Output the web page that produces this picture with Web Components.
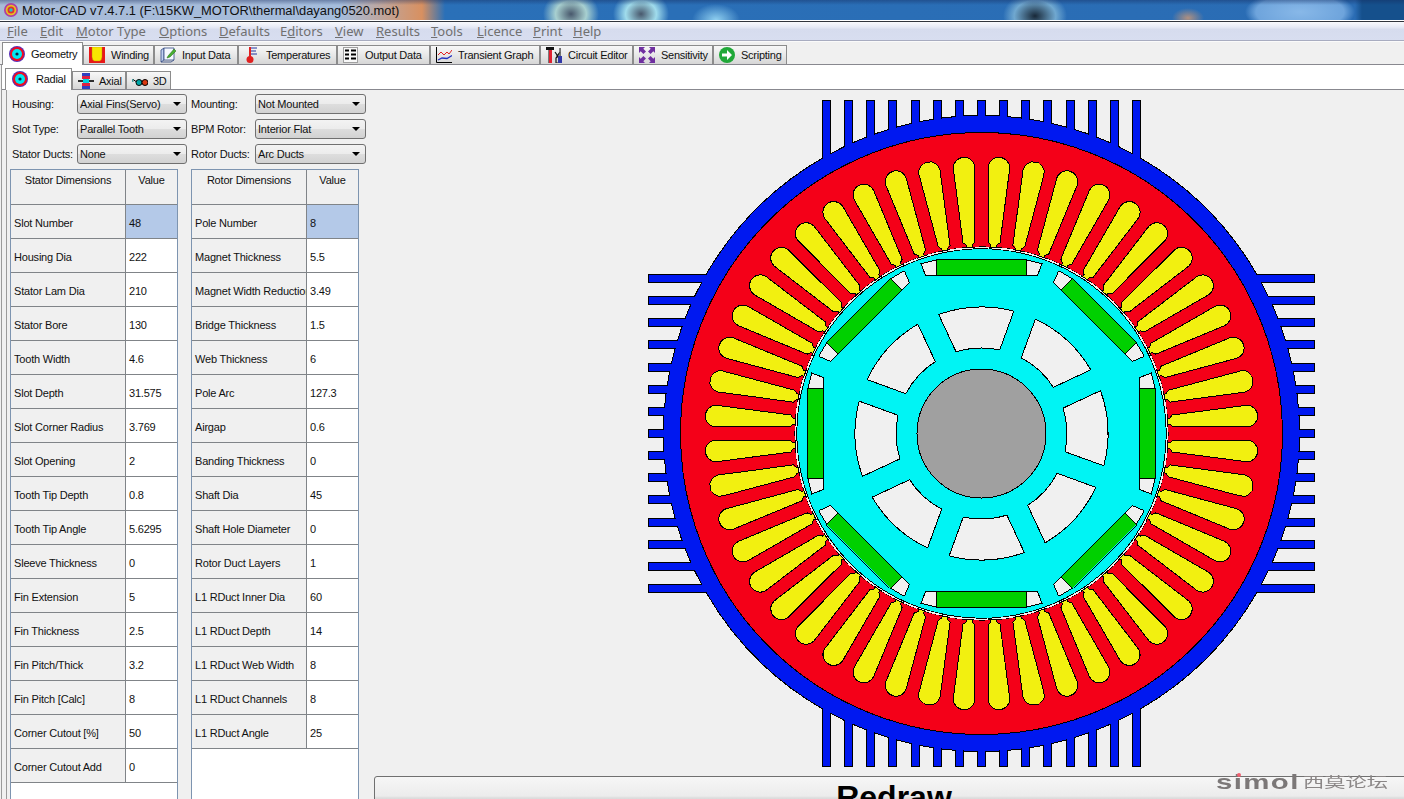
<!DOCTYPE html>
<html>
<head>
<meta charset="utf-8">
<title>Motor-CAD</title>
<style>
  html, body { margin: 0; height: 100%; overflow: hidden; background: #f0f0f0; }
  body { font-family: "Liberation Sans", Arial, sans-serif; }
</style>
</head>
<body>
<app-shell>
  <title-bar>Motor-CAD v7.4.7.1 (F:\15KW_MOTOR\thermal\dayang0520.mot)</title-bar>
  <menu-bar>
    <menu-item style="width:33px"><u>F</u>ile</menu-item>
    <menu-item style="width:36px"><u>E</u>dit</menu-item>
    <menu-item style="width:83px"><u>M</u>otor Type</menu-item>
    <menu-item style="width:60px"><u>O</u>ptions</menu-item>
    <menu-item style="width:61px"><u>D</u>efaults</menu-item>
    <menu-item style="width:55px">E<u>d</u>itors</menu-item>
    <menu-item style="width:41px"><u>V</u>iew</menu-item>
    <menu-item style="width:55px"><u>R</u>esults</menu-item>
    <menu-item style="width:46px"><u>T</u>ools</menu-item>
    <menu-item style="width:56px"><u>L</u>icence</menu-item>
    <menu-item style="width:40px"><u>P</u>rint</menu-item>
    <menu-item style="width:40px"><u>H</u>elp</menu-item>
  </menu-bar>
  <tab-strip>
    <tab-item active icon="geometry" style="width:81px">Geometry</tab-item>
    <tab-item icon="winding" style="width:71px">Winding</tab-item>
    <tab-item icon="input" style="width:84px">Input Data</tab-item>
    <tab-item icon="temp" style="width:99px">Temperatures</tab-item>
    <tab-item icon="output" style="width:93px">Output Data</tab-item>
    <tab-item icon="graph" style="width:110px">Transient Graph</tab-item>
    <tab-item icon="circuit" style="width:93px">Circuit Editor</tab-item>
    <tab-item icon="sens" style="width:80px">Sensitivity</tab-item>
    <tab-item icon="script" style="width:74px">Scripting</tab-item>
  </tab-strip>
  <tab-page>
    <sub-strip>
      <tab-item sub active icon="geometry" style="width:67px">Radial</tab-item>
      <tab-item sub icon="axial" style="width:54px">Axial</tab-item>
      <tab-item sub icon="glasses" style="width:45px">3D</tab-item>
    </sub-strip>
    <radial-page>
      <geom-panel>
        <geom-form>
          <span>Housing:</span><combo-box>Axial Fins(Servo)</combo-box>
          <span class="second">Mounting:</span><combo-box>Not Mounted</combo-box>
          <span>Slot Type:</span><combo-box>Parallel Tooth</combo-box>
          <span class="second">BPM Rotor:</span><combo-box>Interior Flat</combo-box>
          <span>Stator Ducts:</span><combo-box>None</combo-box>
          <span class="second">Rotor Ducts:</span><combo-box>Arc Ducts</combo-box>
        </geom-form>
        <dim-tables>
          <dim-table heading="Stator Dimensions">
            <dim-row label="Slot Number" value="48" selected></dim-row>
            <dim-row label="Housing Dia" value="222"></dim-row>
            <dim-row label="Stator Lam Dia" value="210"></dim-row>
            <dim-row label="Stator Bore" value="130"></dim-row>
            <dim-row label="Tooth Width" value="4.6"></dim-row>
            <dim-row label="Slot Depth" value="31.575"></dim-row>
            <dim-row label="Slot Corner Radius" value="3.769"></dim-row>
            <dim-row label="Slot Opening" value="2"></dim-row>
            <dim-row label="Tooth Tip Depth" value="0.8"></dim-row>
            <dim-row label="Tooth Tip Angle" value="5.6295"></dim-row>
            <dim-row label="Sleeve Thickness" value="0"></dim-row>
            <dim-row label="Fin Extension" value="5"></dim-row>
            <dim-row label="Fin Thickness" value="2.5"></dim-row>
            <dim-row label="Fin Pitch/Thick" value="3.2"></dim-row>
            <dim-row label="Fin Pitch [Calc]" value="8"></dim-row>
            <dim-row label="Corner Cutout [%]" value="50"></dim-row>
            <dim-row label="Corner Cutout Add" value="0"></dim-row>
          </dim-table>
          <dim-table heading="Rotor Dimensions">
            <dim-row label="Pole Number" value="8" selected></dim-row>
            <dim-row label="Magnet Thickness" value="5.5"></dim-row>
            <dim-row label="Magnet Width Reduction" value="3.49"></dim-row>
            <dim-row label="Bridge Thickness" value="1.5"></dim-row>
            <dim-row label="Web Thickness" value="6"></dim-row>
            <dim-row label="Pole Arc" value="127.3"></dim-row>
            <dim-row label="Airgap" value="0.6"></dim-row>
            <dim-row label="Banding Thickness" value="0"></dim-row>
            <dim-row label="Shaft Dia" value="45"></dim-row>
            <dim-row label="Shaft Hole Diameter" value="0"></dim-row>
            <dim-row label="Rotor Duct Layers" value="1"></dim-row>
            <dim-row label="L1 RDuct Inner Dia" value="60"></dim-row>
            <dim-row label="L1 RDuct Depth" value="14"></dim-row>
            <dim-row label="L1 RDuct Web Width" value="8"></dim-row>
            <dim-row label="L1 RDuct Channels" value="8"></dim-row>
            <dim-row label="L1 RDuct Angle" value="25"></dim-row>
          </dim-table>
        </dim-tables>
      </geom-panel>
      <motor-area>
        <motor-view></motor-view>
        <redraw-button>Redraw</redraw-button>
      </motor-area>
    </radial-page>
  </tab-page>
  <water-mark></water-mark>
</app-shell>

<script>
// small helper, every element here is just a style + markup in an open shadow root
function define(name, html, extra) {
  const tpl = document.createElement("template");
  tpl.innerHTML = html;
  class El extends HTMLElement {
    constructor() {
      super();
      this.attachShadow({ mode: "open" });
      this.shadowRoot.appendChild(tpl.content.cloneNode(true));
    }
    connectedCallback() {
      if (extra) extra.call(this, this.shadowRoot);
    }
  }
  customElements.define(name, El);
}

const ICONS = {
  geometry: `<circle cx="8" cy="8" r="8" fill="#5a30b8"/><circle cx="8" cy="8" r="7" fill="#f00c20"/><circle cx="8" cy="8" r="5" fill="#00e8f0"/><circle cx="8" cy="8" r="1.6" fill="#102040"/>`,
  winding: `<rect width="16" height="16" fill="#e81818"/><path d="M3 0h10v10q0 3-2.500 4h-5q-2.500-1-2.500-4z" fill="#f8e800" stroke="#b09000" stroke-width=".4"/>`,
  input: `<path d="M1 3l3-2v12l-3 2z" fill="#c0d0f0" stroke="#304880" stroke-width=".8"/><path d="M4 1h10v12H4z" fill="#f4f8ff" stroke="#304880" stroke-width=".8"/><path d="M1 15h10l3-2" fill="none" stroke="#304880" stroke-width=".8"/><path d="M8 9l6-7 2 2-6 6-3 1z" fill="#48b030" stroke="#206010" stroke-width=".5"/>`,
  temp: `<rect x="5" y="0" width="2" height="11" fill="#e02020"/><circle cx="6" cy="12.500" r="3.500" fill="#e02020"/><path d="M7 1h6M7 4h5M7 7h6" stroke="#2030a0" stroke-width="1" fill="none"/>`,
  output: `<rect x=".5" y=".5" width="14" height="15" fill="#f8f8f8" stroke="#a0a0a0"/><path d="M2 3.500h4M8 3.500h5M2 7.500h4M8 7.500h5M2 11.500h4M8 11.500h5" stroke="#000" stroke-width="1.800" fill="none"/>`,
  graph: `<path d="M.5 0v15.500H16" stroke="#000" fill="none"/><path d="M2 8l3-3 3 3 3-3 2 2 3-4" stroke="#e02020" fill="none"/><path d="M2 13l4-2 5 .5 5-3" stroke="#2030c0" stroke-width="1.300" fill="none"/>`,
  circuit: `<path d="M0 0h8v3H5.500v13h-3V3H0z" fill="#111"/><rect x="3" y="3" width="3" height="13" fill="#e02030"/><path d="M9 5l2 3v2l-1 1v5h3v-5l-1-1V8l2-3" fill="none" stroke="#111" stroke-width="1.200"/><rect x="12" y="9" width="4" height="7" fill="#3038a8"/><rect x="13.300" y="1" width="1.500" height="8" fill="#555"/>`,
  sens: `<g fill="#7030a0"><path d="M0 0h6L4.300 1.700 7 4.400 4.400 7 1.700 4.300 0 6z"/><path d="M16 0h-6l1.700 1.700L9 4.400 11.600 7l2.700-2.700L16 6z"/><path d="M0 16h6l-1.700-1.700L7 11.600 4.400 9l-2.700 2.700L0 10z"/><path d="M16 16h-6l1.700-1.700L9 11.600 11.600 9l2.700 2.700L16 10z"/></g>`,
  script: `<circle cx="8" cy="8" r="8" fill="#20a838"/><path d="M3 6.500h5V3l5 5-5 5V9.500H3z" fill="#fff"/>`,
  axial: `<path d="M0 8h16" stroke="#000" stroke-width="1.600"/><rect x="4" y="0" width="8" height="3" fill="#3040c0"/><rect x="4" y="3" width="8" height="3" fill="#e02040"/><rect x="5" y="6" width="6" height="4" fill="#00d0e0"/><rect x="4" y="10" width="8" height="3" fill="#e02040"/><rect x="4" y="13" width="8" height="3" fill="#3040c0"/>`,
  glasses: `<circle cx="7" cy="9.500" r="3" fill="#00a8a8" stroke="#000"/><circle cx="13" cy="9.500" r="3" fill="#d83810" stroke="#000"/><path d="M1 6.500l3 2M10 9h0" stroke="#000" fill="none"/><path d="M1 6q-1 1 0 3" stroke="#008080" fill="none"/>`
};

define("app-shell", `
  <style>
    :host { display: flex; flex-direction: column; height: 799px; width: 1404px; overflow: hidden; position: relative; }
  </style>
  <slot></slot>`);

define("title-bar", `
  <style>
    :host {
      display: flex; align-items: center; gap: 4px; flex: none; height: 20px; padding-left: 4px;
      font: 12.9px "Liberation Sans", Arial, sans-serif; color: #111; white-space: nowrap;
      background:
        linear-gradient(rgba(20,40,90,.4), rgba(20,40,90,0) 5px),
        radial-gradient(ellipse 28px 24px at 571px 14px, #48586c 0, #a8d0d0 55%, transparent 100%),
        radial-gradient(ellipse 28px 24px at 641px 14px, #48586c 0, #a0dcec 55%, transparent 100%),
        radial-gradient(ellipse 24px 16px at 716px 20px, #90d0f0 0, transparent 100%),
        radial-gradient(ellipse 32px 24px at 1035px 16px, #182838 0, #70a8d0 65%, transparent 100%),
        radial-gradient(ellipse 16px 10px at 1188px 18px, #b09080 0, transparent 100%),
        radial-gradient(ellipse 55px 22px at 1300px 12px, #88b8e8 0, #6ea4dc 80%, transparent 100%),
        linear-gradient(90deg, #a9bcd8 0, #a4bcdc 340px, #d89060 422px, #2a70b8 445px, #2a6cb4 1355px, #15508c 1362px);
    }
    svg { width: 14px; height: 14px; flex: none; }
  </style>
  <svg viewBox="0 0 16 16"><circle cx="8" cy="8" r="8" fill="#b040a0"/><circle cx="8" cy="8" r="6" fill="#e8c020"/><circle cx="8" cy="8" r="4" fill="#e03030"/><circle cx="8" cy="8" r="2" fill="#20c0d0"/></svg>
  <slot></slot>`);

define("menu-bar", `
  <style>
    :host {
      display: flex; align-items: center; flex: none; height: 19px; padding-left: 7px; box-sizing: content-box;
      border-top: 1px solid #fff; border-bottom: 1px solid #a8acc0; box-shadow: inset 0 1px 0 #30343c, 0 1px 0 #fafafa;
      background: linear-gradient(#fbfcfe 0, #e8ebf6 30%, #d6dcee 45%, #d8def0 100%);
      margin-bottom: 1px;
    }
  </style>
  <slot></slot>`);

define("menu-item", `
  <style>
    :host { display: block; flex: none; font: 13px "Noto Sans", sans-serif; color: #707070; white-space: nowrap; }
  </style>
  <slot></slot>`);

define("tab-strip", `
  <style>
    :host {
      display: flex; align-items: flex-end; flex: none; height: 22px; padding-left: 2px;
      border-bottom: 1px solid #88888f; background: #f0f0f0; position: relative; z-index: 2;
    }
  </style>
  <slot></slot>`);

define("tab-item", `
  <style>
    :host {
      display: flex; align-items: center; flex: none; box-sizing: border-box; height: 19px;
      border: 1px solid #8c8c8c; border-bottom: 0;
      background: linear-gradient(#f8f8f8 0, #e8e8e8 50%, #d6d6d6 100%);
      font: 11px "Liberation Sans", Arial, sans-serif; letter-spacing: -.25px; color: #111; white-space: nowrap;
      overflow: hidden;
    }
    :host([active]) { height: 23px; background: #fff; margin-bottom: -1px; position: relative; z-index: 1; padding-bottom: 1px; }
    :host([sub][active]) { height: 22px; padding-bottom: 2px; }
    :host([sub]) { height: 18px; }
    .icon { width: 16px; height: 16px; flex: none; margin: 0 6px 0 5px; }
    :host([active]) .icon { margin-left: 6px; margin-right: 6px; }
    :host([sub]) .icon { margin-right: 5px; margin-left: 5px; }
    :host([active][sub]) .icon { margin-left: 6px; margin-right: 8px; }
  </style>
  <svg class="icon" viewBox="0 0 16 16"></svg>
  <slot></slot>`, function (root) {
    root.querySelector("svg").innerHTML = ICONS[this.getAttribute("icon")] || "";
  });

define("tab-page", `
  <style>
    :host { display: flex; flex-direction: column; flex: 1; min-height: 0; margin-left: 1px; border-left: 1px solid #9a9a9a; }
  </style>
  <slot></slot>`);

define("sub-strip", `
  <style>
    :host {
      display: flex; align-items: flex-end; flex: none; height: 24px; padding-left: 3px;
      background: #fff; border-bottom: 1px solid #88888f; position: relative; z-index: 1;
    }
  </style>
  <slot></slot>`);

define("radial-page", `
  <style>
    :host { display: flex; flex: 1; min-height: 0; margin-left: 4px; border-left: 1px solid #9a9a9a; background: #f0f0f0; }
  </style>
  <slot></slot>`);

define("geom-panel", `
  <style>
    :host { display: flex; flex-direction: column; flex: none; width: 367px; min-height: 0; padding: 4px 0 0 3px; box-sizing: border-box; }
  </style>
  <slot></slot>`);

define("geom-form", `
  <style>
    :host {
      display: grid; flex: none; grid-template-columns: 65px 110px 68px 111px; grid-auto-rows: 20px; row-gap: 5px;
      padding-left: 2px; align-items: center; margin-bottom: 5px;
      font: 11px "Liberation Sans", Arial, sans-serif; letter-spacing: -.2px; color: #111; white-space: nowrap;
    }
    ::slotted(.second) { padding-left: 4px; }
  </style>
  <slot></slot>`);

define("combo-box", `
  <style>
    :host {
      display: flex; align-items: center; box-sizing: border-box; height: 20px; padding: 0 3px 0 2px;
      border: 1px solid #707070; border-radius: 3px; overflow: hidden;
      background: linear-gradient(#f3f3f3 0, #ececec 48%, #dddddd 52%, #d2d2d2 100%);
    }
    .txt { flex: 1; overflow: hidden; }
    i { width: 0; height: 0; margin-right: 2px; border: 4px solid transparent; border-top: 4px solid #000; border-bottom: 0; }
  </style>
  <span class="txt"><slot></slot></span><i></i>`);

define("dim-tables", `
  <style>
    :host { display: flex; flex: 1; min-height: 0; gap: 13px; }
  </style>
  <slot></slot>`);

define("dim-table", `
  <style>
    :host {
      display: block; flex: none; width: 168px; box-sizing: border-box; overflow: hidden;
      border: 1px solid #7d94b0; border-bottom: 0; background: #fff;
      font: 11px "Liberation Sans", Arial, sans-serif; letter-spacing: -.2px; color: #111;
    }
    .head { display: grid; grid-template-columns: 115px 1fr; height: 34px; background: #f0f0f0; border-bottom: 1px solid #808488; text-align: center; }
    .head div { padding-top: 4px; }
    .head div:first-child { border-right: 1px solid #808488; }
  </style>
  <div class="head"><div class="h"></div><div>Value</div></div>
  <slot></slot>`, function (root) {
    root.querySelector(".h").textContent = this.getAttribute("heading");
  });

define("dim-row", `
  <style>
    :host { display: grid; grid-template-columns: 115px 1fr; height: 34px; box-sizing: border-box; border-bottom: 1px solid #808488; white-space: nowrap; }
    div { display: flex; align-items: center; padding: 2px 0 0 3px; overflow: hidden; }
    .l { background: #f0f0f0; border-right: 1px solid #808488; }
    :host([selected]) .v { background: #b4c9e8; }
  </style>
  <div class="l"></div><div class="v"></div>`, function (root) {
    root.querySelector(".l").textContent = this.getAttribute("label");
    root.querySelector(".v").textContent = this.getAttribute("value");
  });

define("motor-area", `
  <style>
    :host { display: flex; flex-direction: column; flex: 1; min-width: 0; }
  </style>
  <slot></slot>`);

define("redraw-button", `
  <style>
    :host {
      display: block; flex: none; box-sizing: border-box; width: 1040px; height: 60px;
      border: 1px solid #707070; border-radius: 3px; text-align: center;
      background: linear-gradient(#f6f6f6 0, #ececec 19px, #dcdcdc 21px, #d0d0d0 100%);
      font: bold 32px/40px "Liberation Sans", Arial, sans-serif; color: #000;
    }
  </style>
  <slot></slot>`);

// the motor section. coordinates are page pixels, scale is 2.87 px per mm
define("motor-view", `
  <style>
    :host { display: block; flex: none; width: 1030px; height: 686px; }
    svg { display: block; }
    path, circle { stroke: #000; stroke-width: 1; }
    circle.gap { stroke: #f0f0f0; stroke-width: 1.6; fill: none; stroke-dasharray: 14 10.33; stroke-dashoffset: 7; }
  </style>
  <svg width="1030" height="686" viewBox="374 90 1030 686" shape-rendering="crispEdges"></svg>`, function (root) {
    const cx = 981.5, cy = 433.5;
    const f = (n) => n.toFixed(1);
    let out = "";

    // housing with 15 fins on each of the 4 sides
    const R = 318, tip = 333, edge = 159, finW = 8, pitch = (2 * edge - finW) / 14;
    const rot = (p, k) => {
      let [x, y] = p;
      for (let i = 0; i < k; i++) [x, y] = [-y, x];
      return [cx + x, cy + y];
    };
    const onCircle = (x) => -Math.sqrt(R * R - x * x);
    let d = "";
    for (let k = 0; k < 4; k++) {
      for (let i = 0; i < 15; i++) {
        const a = -edge + pitch * i, b = a + finW;
        const pts = [[a, onCircle(a)], [a, -tip], [b, -tip], [b, onCircle(b)]];
        pts.forEach((p, j) => {
          const q = rot(p, k);
          if (i === 0 && j === 0) {
            d += k === 0 ? `M${f(q[0])} ${f(q[1])}` : `A${R} ${R} 0 0 1 ${f(q[0])} ${f(q[1])}`;
          } else {
            d += `L${f(q[0])} ${f(q[1])}`;
          }
        });
      }
    }
    const first = rot([-edge, onCircle(-edge)], 0);
    d += `A${R} ${R} 0 0 1 ${f(first[0])} ${f(first[1])}Z`;
    out += `<path d="${d}" fill="#0018f0"/>`;

    // stator lamination
    out += `<circle cx="${cx}" cy="${cy}" r="301" fill="#f40018"/>`;

    // 48 slots, tooth width is constant so the slot gets wider going out
    const half = (r) => r * Math.tan(3.75 * Math.PI / 180) - 6.6;
    const rt = 266, open = 2.9;
    const slot = `M${-open} ${-186}L${-open} ${-189}L${f(-half(191.5))} ${-191.5}L${f(-half(rt))} ${-rt}` +
      `A${f(half(rt))} ${f(half(rt))} 0 0 1 ${f(half(rt))} ${-rt}L${f(half(191.5))} ${-191.5}L${open} ${-189}L${open} ${-186}Z`;
    for (let i = 0; i < 48; i++) {
      const a = 3.75 + 7.5 * i;
      out += `<path transform="translate(${cx} ${cy}) rotate(${a})" d="${slot}" fill="#f2f010"/>`;
    }

    // bore, airgap and rotor
    out += `<circle cx="${cx}" cy="${cy}" r="186.6" fill="#f0f0f0"/>`;
    out += `<circle cx="${cx}" cy="${cy}" r="184.8" fill="#00f4f4"/>`;
    out += `<circle class="gap" cx="${cx}" cy="${cy}" r="185.9"/>`;

    // 8 magnets with their end pockets
    const pocketL = "M-60.500 -169.700L-45 -173.700L-45 -157.700L-55.800 -157.700Z";
    const pocketR = "M60.500 -169.700L45 -173.700L45 -157.700L55.800 -157.700Z";
    for (let i = 0; i < 8; i++) {
      const tr = `transform="translate(${cx} ${cy}) rotate(${i * 45})"`;
      out += `<path ${tr} d="${pocketL}" fill="#f0f0f0"/><path ${tr} d="${pocketR}" fill="#f0f0f0"/>`;
      out += `<path ${tr} d="M-45 -173.700H45V-157.700H-45Z" fill="#00d000"/>`;
    }

    // arc ducts, webs are parallel strips at -25 + 45k degrees
    const ro = 126.500, ri = 85.500, w = 11.500;
    const at = (deg, r, off) => {
      const a = deg * Math.PI / 180, t = Math.sqrt(r * r - off * off);
      return [cx + t * Math.sin(a) + off * Math.cos(a), cy - t * Math.cos(a) + off * Math.sin(a)];
    };
    for (let i = 0; i < 8; i++) {
      const a = -25 + 45 * i, b = a + 45;
      const p1 = at(a, ro, w), p2 = at(b, ro, -w), p3 = at(b, ri, -w), p4 = at(a, ri, w);
      out += `<path d="M${f(p1[0])} ${f(p1[1])}A${ro} ${ro} 0 0 1 ${f(p2[0])} ${f(p2[1])}L${f(p3[0])} ${f(p3[1])}A${ri} ${ri} 0 0 0 ${f(p4[0])} ${f(p4[1])}Z" fill="#f0f0f0"/>`;
    }

    // shaft
    out += `<circle cx="${cx}" cy="${cy}" r="64.500" fill="#a0a0a0"/>`;
    root.querySelector("svg").innerHTML = out;
  });

define("water-mark", `
  <style>
    :host { position: absolute; left: 1216px; top: 770px; width: 180px; height: 24px; color: #7c7878; filter: blur(.4px); white-space: nowrap; }
    .en { position: absolute; left: 0; top: 0; font: bold 21px/24px "Liberation Sans", Arial, sans-serif; letter-spacing: 1px; transform: scaleX(1.4); transform-origin: 0 50%; }
    .cn { position: absolute; left: 87px; top: -1px; font: 14px/24px "Noto Sans CJK SC", sans-serif; transform: scaleX(1.52); transform-origin: 0 50%; color: #8a8686; }
    .dot { position: absolute; left: 21px; top: 3px; width: 4px; height: 4px; border-radius: 50%; background: #f06070; }
  </style>
  <span class="en">simol</span><span class="cn">西莫论坛</span><span class="dot"></span>`);
</script>
</body>
</html>
